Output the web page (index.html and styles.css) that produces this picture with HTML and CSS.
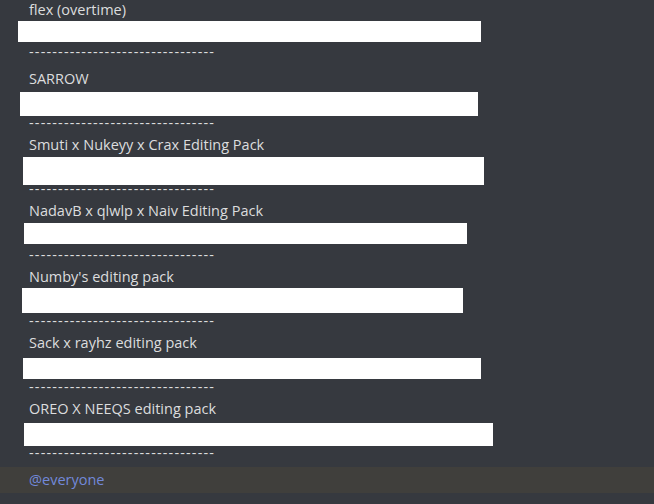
FILE: index.html
```html
<!DOCTYPE html>
<html lang="en">
<head>
<meta charset="utf-8">
<title>Editing packs</title>
<link rel="stylesheet" href="styles.css">
</head>
<body>
<div class="chat">
  <div class="message">
    <section class="pack pack-first">
      <div class="line line-top">flex (overtime)</div>
      <div class="line"></div>
      <div class="line dashes">--------------------------------</div>
      <div class="redact redact-1"></div>
    </section>
    <section class="pack">
      <div class="line">SARROW</div>
      <div class="line"></div>
      <div class="line dashes">--------------------------------</div>
      <div class="redact redact-2"></div>
    </section>
    <section class="pack">
      <div class="line">Smuti x Nukeyy x Crax Editing Pack</div>
      <div class="line"></div>
      <div class="line dashes">--------------------------------</div>
      <div class="redact redact-3"></div>
    </section>
    <section class="pack">
      <div class="line">NadavB x qlwlp x Naiv Editing Pack</div>
      <div class="line"></div>
      <div class="line dashes">--------------------------------</div>
      <div class="redact redact-4"></div>
    </section>
    <section class="pack">
      <div class="line">Numby's editing pack</div>
      <div class="line"></div>
      <div class="line dashes">--------------------------------</div>
      <div class="redact redact-5"></div>
    </section>
    <section class="pack">
      <div class="line">Sack x rayhz editing pack</div>
      <div class="line"></div>
      <div class="line dashes">--------------------------------</div>
      <div class="redact redact-6"></div>
    </section>
    <section class="pack">
      <div class="line">OREO X NEEQS editing pack</div>
      <div class="line"></div>
      <div class="line dashes">--------------------------------</div>
      <div class="redact redact-7"></div>
    </section>
  </div>
  <div class="message mentioned">
    <div class="line"><span class="mention">@everyone</span></div>
  </div>
</div>
</body>
</html>
```

FILE: styles.css
```css
html, body {
  margin: 0;
  padding: 0;
  background: #36393f;
  height: 100%;
  overflow: hidden;
}

body {
  font-family: "Open Sans", "Noto Sans", sans-serif;
  font-size: 14.5px;
  color: #dcddde;
}

.chat {
  display: flex;
  flex-direction: column;
}

.message {
  padding-left: 29px;
}

.pack {
  position: relative;
}

.pack-first {
  margin-bottom: 5px;
}

.line {
  height: 22px;
  line-height: 22px;
  white-space: pre;
}

.line-top {
  height: 19px;
  line-height: 19px;
}

.dashes {
  letter-spacing: 1.15px;
}

.redact {
  position: absolute;
  background: #ffffff;
}

.redact-1 { top: 21px; left: -11px; width: 463px; height: 21px; }
.redact-2 { top: 24px; left: -9px;  width: 458px; height: 24px; }
.redact-3 { top: 23px; left: -6px;  width: 461px; height: 28px; }
.redact-4 { top: 23px; left: -5px;  width: 443px; height: 21px; }
.redact-5 { top: 22px; left: -7px;  width: 441px; height: 25px; }
.redact-6 { top: 26px; left: -6px;  width: 458px; height: 21px; }
.redact-7 { top: 25px; left: -5px;  width: 469px; height: 23px; }

.mentioned {
  margin-top: 3px;
  padding-top: 2px;
  padding-bottom: 2px;
  background: #403f3c;
}

.mention {
  color: #7289da;
}
```
